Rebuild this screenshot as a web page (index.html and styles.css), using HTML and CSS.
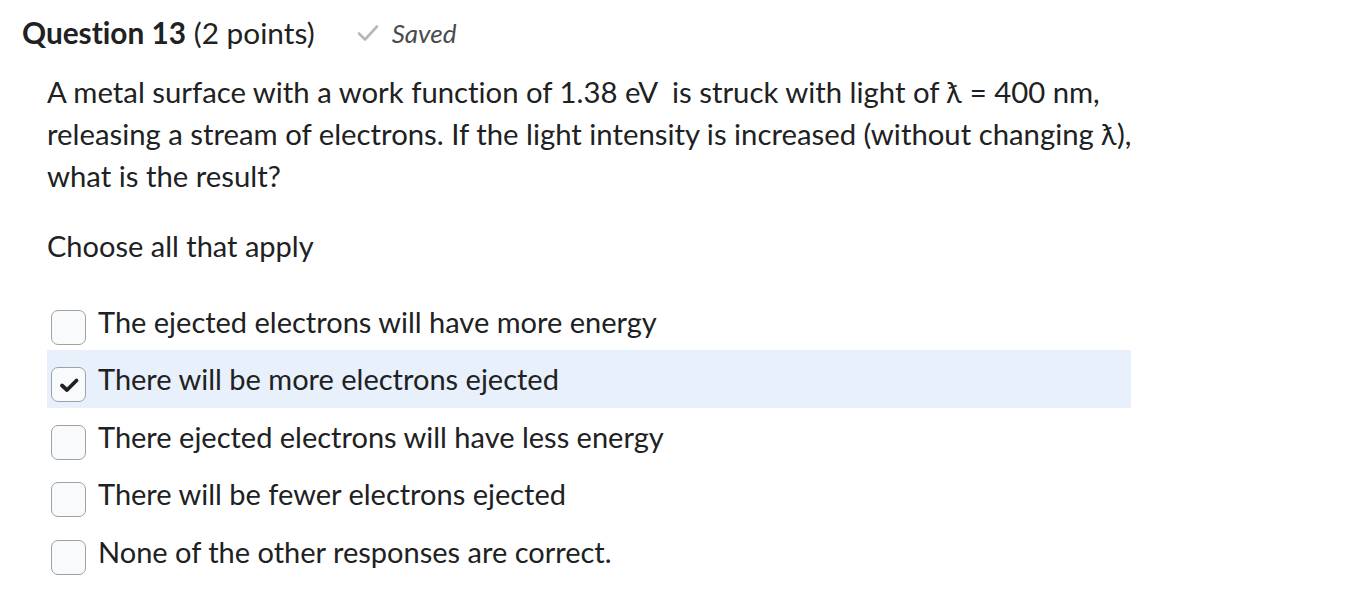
FILE: index.html
```html
<!DOCTYPE html>
<html>
<head>
<meta charset="utf-8">
<link rel="stylesheet" href="styles.css">
</head>
<body>
<div class="page">
  <div class="qhead">
    <h2 class="qtitle"><strong>Question 13</strong> (2 points)</h2>
    <span class="saved">
      <svg class="savedcheck" viewBox="0 0 22 18" width="22" height="18"><path d="M2 9.5 L8 15.5 L20 2.5" fill="none" stroke="#b5b8bb" stroke-width="2.6" stroke-linecap="round" stroke-linejoin="round"/></svg>
      <em>Saved</em>
    </span>
  </div>
  <div class="qbody">
    <p class="prompt">A metal surface with a work function of 1.38 eV&nbsp; is struck with light of ƛ = 400 nm, releasing a stream of electrons. If the light intensity is increased (without changing ƛ), what is the result?</p>
    <p class="instr">Choose all that apply</p>
    <ul class="options">
      <li class="opt"><span class="box"></span><span class="label">The ejected electrons will have more energy</span></li>
      <li class="opt selected"><span class="box checked"><svg viewBox="0 0 24 24" width="24" height="24"><path d="M5 12.5 L10 17 L19.5 7.5" fill="none" stroke="#202122" stroke-width="3.8" stroke-linecap="round" stroke-linejoin="round"/></svg></span><span class="label">There will be more electrons ejected</span></li>
      <li class="opt"><span class="box"></span><span class="label">There ejected electrons will have less energy</span></li>
      <li class="opt"><span class="box"></span><span class="label">There will be fewer electrons ejected</span></li>
      <li class="opt"><span class="box"></span><span class="label">None of the other responses are correct.</span></li>
    </ul>
  </div>
</div>
</body>
</html>
```
FILE: styles.css
```css
html, body {
  margin: 0;
  padding: 0;
  background: #ffffff;
}
body {
  font-family: Lato, "Open Sans", sans-serif;
  color: #202122;
  font-variant-ligatures: no-common-ligatures;
}
.page {
  padding: 14px 0 0 22px;
}
.qhead {
  display: flex;
  align-items: center;
  gap: 42px;
  height: 38px;
}
.qtitle {
  margin: 0;
  font-size: 29.8px;
  font-weight: 400;
  line-height: 38px;
}
.qtitle strong {
  font-weight: 700;
}
.saved {
  display: flex;
  align-items: center;
  gap: 13px;
  color: #494c4e;
  font-size: 26px;
}
.saved em {
  font-style: italic;
}
.savedcheck {
  display: block;
}
.qbody {
  padding-left: 25px;
  width: 1084px;
}
.prompt {
  margin: 19px 0 0 0;
  width: 1110px;
  font-size: 29.3px;
  line-height: 42px;
}
.instr {
  margin: 28px 0 0 0;
  font-size: 29px;
  line-height: 42px;
}
.options {
  list-style: none;
  margin: 25.5px 0 0 0;
  padding: 0;
}
.opt {
  display: flex;
  align-items: center;
  gap: 12px;
  height: 57.5px;
  padding-left: 4px;
  font-size: 29px;
}
.opt.selected {
  background: #e8f0fb;
}
.box {
  width: 33px;
  height: 33px;
  margin-top: 12px;
  border: 1px solid #9ea2a6;
  border-radius: 7px;
  background: #f9fafc;
  display: flex;
  align-items: center;
  justify-content: center;
  flex: none;
}
.box svg {
  display: block;
}
```
